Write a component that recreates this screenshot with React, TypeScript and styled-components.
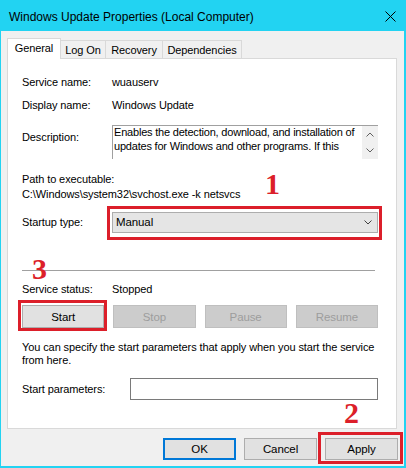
import React from "react";
import styled, { createGlobalStyle } from "styled-components";

const GlobalStyle = createGlobalStyle`
  html, body { margin: 0; padding: 0; background: #f0f0f0; }
  body { font-family: "Liberation Sans", Arial, sans-serif; font-size: 11px; letter-spacing: -0.1px; color: #000; }
  * { box-sizing: border-box; }
`;

const Window = styled.div`
  position: relative;
  width: 406px;
  height: 468px;
  background: #f0f0f0;
  border-left: 1px solid #22d3f2;
  border-right: 2px solid #22d3f2;
  border-bottom: 2px solid #22d3f2;
  display: flex;
  flex-direction: column;
  overflow: hidden;
`;

const TitleBar = styled.div`
  height: 31px;
  background: #22d3f2;
  display: flex;
  align-items: center;
  justify-content: space-between;
  padding: 2px 8px 0 8px;
  font-size: 12px;
  letter-spacing: 0;
`;

const Body = styled.div`
  padding: 7px 6px 0 6px;
  display: flex;
  flex-direction: column;
`;

const TabStrip = styled.div`
  height: 20px;
  display: flex;
  align-items: flex-end;
  position: relative;
  z-index: 1;
`;

const Tab = styled.div<{ $w: number; $active?: boolean }>`
  width: ${(p) => p.$w}px;
  height: ${(p) => (p.$active ? 21 : 18)}px;
  margin-bottom: ${(p) => (p.$active ? -1 : 0)}px;
  margin-left: ${(p) => (p.$active ? 0 : -1)}px;
  background: ${(p) => (p.$active ? "#ffffff" : "#f0f0f0")};
  border: 1px solid #d9d9d9;
  border-bottom: none;
  display: flex;
  align-items: center;
  justify-content: center;
  padding-bottom: ${(p) => (p.$active ? 3 : 0)}px;
  position: relative;
  z-index: ${(p) => (p.$active ? 2 : 1)};
`;

const Panel = styled.div`
  width: 390px;
  height: 371px;
  background: #fff;
  border: 1px solid #d9d9d9;
  padding: 16px 18px 0 14px;
  display: flex;
  flex-direction: column;
`;

const Row = styled.div<{ $label: number; $mt: number; $align?: string }>`
  display: grid;
  grid-template-columns: ${(p) => p.$label}px 1fr;
  align-items: ${(p) => p.$align || "center"};
  margin-top: ${(p) => p.$mt}px;
  line-height: 15px;
`;

const Label = styled.div<{ $pt?: number }>`
  padding-top: ${(p) => p.$pt || 0}px;
  line-height: 15px;
  white-space: nowrap;
`;

const Line = styled.div<{ $mt?: number }>`
  margin-top: ${(p) => p.$mt || 0}px;
  line-height: 15px;
  white-space: nowrap;
`;

const DescBox = styled.div`
  height: 34px;
  border-top: 1px solid #a0a0a0;
  border-left: 1px solid #a0a0a0;
  display: flex;
  overflow: hidden;
`;

const DescText = styled.div`
  flex: 1;
  padding: 0 0 0 1px;
  margin-top: -1px;
  line-height: 14px;
  letter-spacing: -0.2px;
  white-space: nowrap;
  overflow: hidden;
`;

const ScrollBar = styled.div`
  width: 16px;
  background: #f0f0f0;
  display: flex;
  flex-direction: column;
  justify-content: space-between;
  align-items: center;
  padding: 6px 0 6px 0;
`;

const Overlay = styled.div`
  position: relative;
`;

const RedBox = styled.div<{ $t: number; $r: number; $b: number; $l: number }>`
  position: absolute;
  top: -${(p) => p.$t}px;
  right: -${(p) => p.$r}px;
  bottom: -${(p) => p.$b}px;
  left: -${(p) => p.$l}px;
  border: 3px solid #dc1f2a;
  pointer-events: none;
`;

const Combo = styled.div`
  height: 21px;
  background: #e5e5e5;
  border: 1px solid #adadad;
  display: flex;
  align-items: center;
  justify-content: space-between;
  padding: 0 5px 0 3px;
  font-size: 11.5px;
`;

const Separator = styled.div`
  margin-top: 37px;
  width: 353px;
  height: 1px;
  background: #a0a0a0;
`;

const ButtonRow = styled.div`
  margin-top: 8px;
  display: grid;
  grid-template-columns: repeat(4, 1fr);
  gap: 9px;
`;

const Btn = styled.div<{ $disabled?: boolean; $default?: boolean; $w?: number; $h?: number }>`
  width: ${(p) => (p.$w ? `${p.$w}px` : "auto")};
  height: ${(p) => p.$h || 23}px;
  background: ${(p) => (p.$disabled ? "#cccccc" : "#e1e1e1")};
  border: ${(p) => (p.$default ? "2px solid #0078d7" : p.$disabled ? "1px solid #bfbfbf" : "1px solid #adadad")};
  color: ${(p) => (p.$disabled ? "#9d9d9d" : "#000")};
  display: flex;
  align-items: center;
  justify-content: center;
  font-size: 11.5px;
`;

const Para = styled.div`
  margin-top: 13px;
  line-height: 13px;
  width: 356px;
`;

const Input = styled.div`
  height: 22px;
  background: #fff;
  border: 1px solid #7a7a7a;
`;

const Footer = styled.div`
  margin-top: 9px;
  display: flex;
  justify-content: flex-end;
  gap: 8px;
`;

const Digit = styled.span<{ $x: number; $y: number }>`
  position: absolute;
  left: ${(p) => p.$x}px;
  top: ${(p) => p.$y}px;
  font-family: "Liberation Serif", "Times New Roman", serif;
  font-weight: bold;
  font-size: 30px;
  line-height: 1;
  color: #dc1f2a;
  letter-spacing: 0;
  z-index: 5;
`;

const Chevron = ({ up }: { up?: boolean }) => (
  <svg width="8" height="5" viewBox="0 0 8 5">
    <path d={up ? "M0.5 4.5 L4 1 L7.5 4.5" : "M0.5 0.5 L4 4 L7.5 0.5"} fill="none" stroke="#606060" strokeWidth="1" />
  </svg>
);

export default function App() {
  return (
    <>
      <GlobalStyle />
      <Window>
        <TitleBar>
          <span>Windows Update Properties (Local Computer)</span>
          <svg width="11" height="11" viewBox="0 0 11 11">
            <path d="M0.5 0.5 L10.5 10.5 M10.5 0.5 L0.5 10.5" stroke="#000" strokeWidth="1" fill="none" />
          </svg>
        </TitleBar>
        <Body>
          <TabStrip>
            <Tab $w={54} $active>General</Tab>
            <Tab $w={46}>Log On</Tab>
            <Tab $w={58}>Recovery</Tab>
            <Tab $w={80}>Dependencies</Tab>
          </TabStrip>
          <Panel>
            <Row $label={90} $mt={0}>
              <Label>Service name:</Label>
              <div>wuauserv</div>
            </Row>
            <Row $label={90} $mt={8}>
              <Label>Display name:</Label>
              <div>Windows Update</div>
            </Row>
            <Row $label={90} $mt={12} $align="start">
              <Label $pt={5}>Description:</Label>
              <DescBox>
                <DescText>
                  Enables the detection, download, and installation of
                  <br />
                  updates for Windows and other programs. If this
                </DescText>
                <ScrollBar>
                  <Chevron up />
                  <Chevron />
                </ScrollBar>
              </DescBox>
            </Row>
            <Line $mt={13}>Path to executable:</Line>
            <Line>C:\Windows\system32\svchost.exe -k netsvcs</Line>
            <Row $label={90} $mt={10}>
              <Label>Startup type:</Label>
              <Overlay>
                <Combo>
                  <span>Manual</span>
                  <svg width="8" height="5" viewBox="0 0 8 5">
                    <path d="M0.5 0.5 L4 4 L7.5 0.5" fill="none" stroke="#404040" strokeWidth="1" />
                  </svg>
                </Combo>
                <RedBox $t={6} $r={4} $b={7} $l={5} />
              </Overlay>
            </Row>
            <Separator />
            <Row $label={90} $mt={11}>
              <Label>Service status:</Label>
              <div>Stopped</div>
            </Row>
            <ButtonRow>
              <Overlay>
                <Btn>Start</Btn>
                <RedBox $t={5} $r={3} $b={3} $l={4} />
              </Overlay>
              <Btn $disabled>Stop</Btn>
              <Btn $disabled>Pause</Btn>
              <Btn $disabled>Resume</Btn>
            </ButtonRow>
            <Para>
              You can specify the start parameters that apply when you start the service
              <br />
              from here.
            </Para>
            <Row $label={108} $mt={11}>
              <Label>Start parameters:</Label>
              <Input />
            </Row>
          </Panel>
          <Footer>
            <Btn $default $w={73} $h={22}>OK</Btn>
            <Btn $w={73} $h={22}>Cancel</Btn>
            <Overlay>
              <Btn $w={73} $h={22}>Apply</Btn>
              <RedBox $t={6} $r={5} $b={4} $l={7} />
            </Overlay>
          </Footer>
        </Body>
        <Digit $x={264} $y={169}>1</Digit>
        <Digit $x={31} $y={254}>3</Digit>
        <Digit $x={343} $y={398}>2</Digit>
      </Window>
    </>
  );
}
